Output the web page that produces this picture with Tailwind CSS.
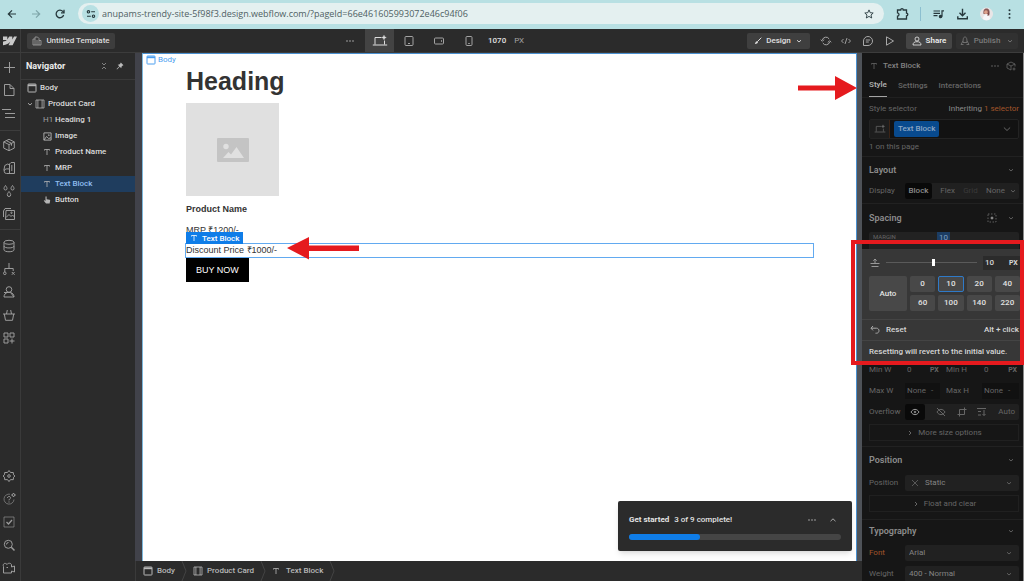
<!DOCTYPE html>
<html lang="en">
<head>
<meta charset="utf-8">
<title>Webflow Designer</title>
<script src="https://cdn.jsdelivr.net/npm/@tailwindcss/browser@4"></script>
</head>
<body class="h-screen overflow-hidden flex flex-col bg-[#1b1b1b] antialiased font-['Roboto',sans-serif] text-[8px] leading-4 text-[#dcdcdc]">

<!-- Shared icons -->
<svg class="hidden">
  <defs>
    <symbol id="chev" viewBox="0 0 8 8"><path d="M2 3.200 4 5l2-1.800" fill="none" stroke="currentColor" stroke-width=".9"/></symbol>
    <symbol id="chevr" viewBox="0 0 8 8"><path d="M3 2 5 4 3 6" fill="none" stroke="currentColor"/></symbol>
    <symbol id="tee" viewBox="0 0 8 8"><path d="M1.500 2.500v-1h5v1M4 1.500v5.500" fill="none" stroke="currentColor" stroke-width=".8"/></symbol>
    <symbol id="bodyi" viewBox="0 0 10 10"><rect x="1" y="1" width="8" height="8" rx=".6" fill="none" stroke="currentColor"/><path d="M1 1.500h8v1.700H1z" fill="currentColor"/></symbol>
    <symbol id="block" viewBox="0 0 10 10"><path d="M1 1h8v8H1zM2.900 1v8M7.100 1v8" fill="none" stroke="currentColor" stroke-width=".8"/></symbol>
    <symbol id="dots" viewBox="0 0 10 10"><g fill="currentColor"><circle cx="2" cy="5" r=".8"/><circle cx="5" cy="5" r=".8"/><circle cx="8" cy="5" r=".8"/></g></symbol>
    <symbol id="desk" viewBox="0 0 16 12"><g fill="none" stroke="currentColor"><path d="M9.500 2.500h-6.500v7M12.500 5.500v4M.8 10h14.400"/></g><path d="m12 .2.700 1.600 1.600.7-1.600.7-.7 1.600-.7-1.600-1.600-.7 1.600-.7z" fill="currentColor" stroke="currentColor" stroke-width=".4"/></symbol>
  </defs>
</svg>

<!-- Browser bar -->
<header class="h-[29px] shrink-0 bg-[#b8e0e3] flex items-start pl-1.5 pr-2 text-[#26383c]">
  <nav class="flex items-center h-[27px] gap-3 w-[72px]">
    <button aria-label="Back"><svg class="size-3" viewBox="0 0 12 12" fill="none" stroke="currentColor" stroke-width="1.200"><path d="M10 6H2.500M6 2.300 2.300 6 6 9.700"/></svg></button>
    <button aria-label="Forward" class="text-[#7ea5a9]"><svg class="size-3" viewBox="0 0 12 12" fill="none" stroke="currentColor" stroke-width="1.200"><path d="M2 6h7.500M6 2.300 9.700 6 6 9.700"/></svg></button>
    <button aria-label="Reload"><svg class="size-3" viewBox="0 0 12 12" fill="none" stroke="currentColor" stroke-width="1.300"><path d="M9.600 7A3.800 3.800 0 1 1 8.800 3.400L10 4.500"/><path d="M10 1.800v3H7"/></svg></button>
  </nav>
  <div class="mt-[3px] h-[21px] flex-1 rounded-full bg-[#e4f0f0] flex items-center pl-1 pr-2.5">
    <button aria-label="Site information" class="size-[17px] rounded-full bg-[#b8e0e3] flex items-center justify-center"><svg class="size-2.5" viewBox="0 0 10 10" fill="none" stroke="currentColor" stroke-width="1.100"><circle cx="2.500" cy="2.800" r="1.200"/><path d="M5.200 2.800H9M1 7.200h3.800"/><circle cx="7.500" cy="7.200" r="1.200"/></svg></button>
    <input aria-label="Address" class="ml-[3px] flex-1 bg-transparent font-['Open_Sans',sans-serif] text-[9px] text-[#4f6063] outline-none" value="anupams-trendy-site-5f98f3.design.webflow.com/?pageId=66e461605993072e46c94f06">
    <button aria-label="Bookmark"><svg class="size-2.5" viewBox="0 0 10 10" fill="none" stroke="currentColor" stroke-width=".9"><path d="m5 .9 1.200 2.800 3 .3L7 6l.7 3L5 7.400 2.300 9 3 6 .8 4l3-.3z"/></svg></button>
  </div>
  <div class="flex items-center h-[27px] ml-3">
    <button aria-label="Extensions"><svg class="size-3.5" viewBox="0 0 14 14" fill="none" stroke="currentColor" stroke-width="1.300"><path d="M1.500 3h3.200a1.200 1.200 0 0 1 2.600 0h3.200v3.200a1.200 1.200 0 0 1 0 2.600V12h-9V9.200c2-.2 2-3.200 0-3.400z"/></svg></button>
    <span class="ml-2.5 mr-3 w-px h-3.5 bg-[#8cbfd0]"></span>
    <button aria-label="Media"><svg class="size-3" viewBox="0 0 12 12" fill="none" stroke="currentColor" stroke-width="1.200"><path d="M.5 3H7M.5 5.300H7M.5 7.600h4"/><circle cx="7.600" cy="8.500" r="1.200" fill="currentColor"/><path d="M9 8.500V2.800h2"/></svg></button>
    <button aria-label="Downloads" class="ml-3"><svg class="size-3" viewBox="0 0 12 12" fill="none" stroke="currentColor" stroke-width="1.400"><path d="M5.500.8v6.500M2.500 4.700l3 3 3-3M.8 8.300v2.500h9.500V8.300"/></svg></button>
    <button aria-label="Profile" class="ml-[11px]"><svg class="size-3.5" viewBox="0 0 14 14"><circle cx="6.500" cy="7" r="6.500" fill="#e9e5e6"/><path d="M3.500 7c-.6-4 1-5.500 3-5.500S10.100 3 9.500 7z" fill="#8a5a58"/><circle cx="6" cy="5.200" r="1.900" fill="#dca28c"/><path d="M3 12c0-3 1.500-4.500 3.500-4.500S10 9 10 12c-2 1.700-5 1.700-7 0z" fill="#f7f7f9"/><path d="M8 3.500 9.500 8l-2 1z" fill="#7a4444"/></svg></button>
    <button aria-label="Menu" class="ml-2.5"><svg class="size-3" viewBox="0 0 12 12" fill="currentColor"><circle cx="5.500" cy="2.200" r="1"/><circle cx="5.500" cy="6" r="1"/><circle cx="5.500" cy="9.800" r="1"/></svg></button>
  </div>
</header>

<!-- Designer top bar -->
<div class="h-6 shrink-0 bg-[#2b2b2b] border-b border-[#3c3c3c] flex items-center pr-1.5">
  <div class="w-[355px] flex items-center self-stretch">
    <button aria-label="Webflow menu" class="w-[21px] self-stretch border-r border-[#3c3c3c] flex items-center justify-center text-[#c9c9c9]"><svg class="w-3.5 h-2.5" viewBox="0 0 14 9" fill="currentColor"><path d="M14 0 9.600 8.700H5.500l1.800-3.600C5.800 7.200 3.600 8.500 0 8.700V5.200s2.400-.1 3.800-1.600H0V0h4.300v3L6.200 0h3.100v3L11 0z"/></svg></button>
    <button class="ml-1.5 h-4 w-[88px] justify-center rounded-xs bg-[#3d3d3d] flex items-center gap-1 font-medium"><svg class="size-2.5 text-[#a5a5a5]" viewBox="0 0 10 10" fill="none" stroke="currentColor" stroke-width=".8"><path d="M3 9V1h2.500L7 2.500V9zM3 3H1v6h2M7 4.500h2V9H7M5 4v5"/></svg>Untitled Template</button>
    <button aria-label="More" class="ml-auto text-[#aaa]"><svg class="size-2.5"><use href="#dots"/></svg></button>
  </div>
  <div class="flex items-center self-stretch text-[#a3a3a3] ml-2.5">
    <button aria-label="Desktop" class="w-[29px] self-stretch bg-[#434343] text-[#dedede] flex items-center justify-center"><svg class="w-4 h-3"><use href="#desk"/></svg></button>
    <button aria-label="Tablet" class="w-[30px] flex justify-center"><svg class="size-2.5" viewBox="0 0 10 10" fill="none" stroke="currentColor"><rect x="1" y=".5" width="8" height="9" rx="1"/><path d="M4 7.500h2"/></svg></button>
    <button aria-label="Mobile landscape" class="w-[30px] flex justify-center"><svg class="size-2.5" viewBox="0 0 10 10" fill="none" stroke="currentColor"><rect x=".5" y="2" width="9" height="6" rx="1"/><path d="M7.500 4.200v1.600"/></svg></button>
    <button aria-label="Mobile portrait" class="w-[30px] flex justify-center"><svg class="size-2.5" viewBox="0 0 10 10" fill="none" stroke="currentColor"><rect x="2" y=".5" width="6" height="9" rx="1"/><path d="M4.200 7.500h1.600"/></svg></button>
    <span class="ml-1 text-[#e0e0e0] font-medium">1070</span><span class="ml-2">PX</span>
  </div>
  <div class="ml-auto flex items-center text-[#a9a9a9]">
    <button class="h-4 w-[63px] rounded-xs bg-[#3f3f3f] text-[#e0e0e0] font-medium flex items-center justify-center gap-1"><svg class="size-2" viewBox="0 0 8 8" fill="none" stroke="currentColor"><path d="M7.300.7 3.500 4.500" /><path d="M3.700 4.300c-1.500-.6-2.200.8-2.900 2.800 2 0 3.700-1 2.900-2.800z" fill="currentColor" stroke="none"/></svg>Design<svg class="size-2"><use href="#chev"/></svg></button>
    <button aria-label="Sync" class="ml-2.5"><svg class="size-3" viewBox="0 0 12 12" fill="none" stroke="currentColor"><path d="M2.400 5A3.700 3.700 0 0 1 9.200 4M9.600 7a3.700 3.700 0 0 1-6.800 1M.8 4.700l1.600 1.600L4 4.700M8 7.300l1.600-1.600 1.600 1.600"/></svg></button>
    <button aria-label="Code" class="ml-2"><svg class="size-3" viewBox="0 0 12 12" fill="none" stroke="currentColor" stroke-width=".9"><path d="M3.500 4 1.500 6l2 2M8.500 4l2 2-2 2M7 3 5 9"/></svg></button>
    <button aria-label="Comments" class="ml-2.5"><svg class="size-3" viewBox="0 0 12 12" fill="none" stroke="currentColor"><path d="M1.500 10.500V6A4.500 4.500 0 1 1 6 10.500zM3.800 5h4.400M3.800 7h3"/></svg></button>
    <button aria-label="Preview" class="ml-2.5"><svg class="size-3" viewBox="0 0 12 12" fill="none" stroke="currentColor"><path d="M2.500 1.800 9.500 6l-7 4.200z"/></svg></button>
    <button class="ml-2.5 h-4 w-[46px] rounded-xs bg-[#454545] text-[#ececec] font-semibold flex items-center justify-center gap-1"><svg class="size-2.5" viewBox="0 0 10 10" fill="none" stroke="currentColor" stroke-width=".8"><circle cx="5" cy="3" r="2"/><path d="M1 9c0-2.500 1.500-3.300 4-3.300S9 6.500 9 9z"/></svg>Share</button>
    <button class="ml-1 h-4 w-[62px] rounded-xs bg-[#313131] text-[#7b7b7b] font-medium flex items-center justify-center gap-1"><svg class="size-2.5" viewBox="0 0 10 10" fill="none" stroke="currentColor" stroke-width=".8"><path d="M3 6.500c0-4 .5-5.500 2-5.500s2 1.500 2 5.500zM3 5 1 8.500h2.500M7 5l2 3.500H6.500"/></svg>Publish<svg class="size-2 ml-0.5"><use href="#chev"/></svg></button>
  </div>
</div>

<div class="flex-1 min-h-0 flex">
  <!-- Tool rail -->
  <nav class="w-[21px] shrink-0 bg-[#2b2b2b] border-r border-[#3a3a3a] flex flex-col text-[#9c9c9c] [&_button]:h-[23px] [&_button]:w-full [&_button]:flex [&_button]:items-center [&_button]:justify-center [&_svg]:size-3.5 [&_svg]:fill-none [&_svg]:stroke-current">
    <div class="pt-0.5 pb-1.5 pr-0.5 border-b border-[#3d3d3d]">
      <button aria-label="Add"><svg viewBox="0 0 14 14"><path d="M7.500 2v11M2 7.500h11"/></svg></button>
      <button aria-label="Pages"><svg viewBox="0 0 14 14"><path d="M2.500 1.500H8L12 5.500v7H2.500zM8 1.500v4h4"/></svg></button>
      <button aria-label="Navigator"><svg viewBox="0 0 14 14"><path d="M0 3.500h9M3 7.500h10M3 11.500h10"/></svg></button>
    </div>
    <div class="pt-0.5 pb-1 pr-0.5 border-b border-[#3d3d3d]">
      <button aria-label="Components"><svg viewBox="0 0 14 14"><path d="m7 1.300 5.300 2.600v6.200L7 12.700l-5.300-2.600V3.900zM1.700 3.900 7 6.600l5.300-2.700M7 6.600v6.100M4.200 2.600l5.300 2.700v2.400"/></svg></button>
      <button aria-label="Variables"><svg viewBox="0 0 14 14"><path d="M7.500 3 9 1.500h3.500v11h-8a2.300 2.300 0 0 1 0-4.600h3zM7.500 7.900v4.600M1.800 9.500l1-5 3-1.500 1.700 1M9.800 4v6"/></svg></button>
      <button aria-label="Styles"><svg viewBox="0 0 14 14"><path d="M3.500 1.500C2.300 3.200 2 3.700 2 4.500a1.500 1.500 0 0 0 3 0c0-.8-.3-1.300-1.500-3zM10.500 1.500C9.300 3.200 9 3.700 9 4.500a1.500 1.500 0 0 0 3 0c0-.8-.3-1.300-1.500-3zM7 7.500c-1.300 1.800-1.700 2.400-1.700 3.300a1.700 1.700 0 0 0 3.400 0c0-.9-.4-1.500-1.700-3.300z"/></svg></button>
      <button aria-label="Assets"><svg viewBox="0 0 14 14"><path d="M4 3.500h8.500v9H3.500zM4 10.500l3-3 2 2 1.500-1.500 2 2M1.500 10V4l1.500-2.500h6"/><circle cx="9.500" cy="5.800" r=".7"/></svg></button>
    </div>
    <div class="pt-1 pr-0.5">
      <button aria-label="CMS"><svg viewBox="0 0 14 14"><ellipse cx="7" cy="3.300" rx="5" ry="2"/><path d="M2 3.300v7.500c0 2.600 10 2.600 10 0V3.300M2 7c0 2.600 10 2.600 10 0"/></svg></button>
      <button aria-label="Logic"><svg viewBox="0 0 14 14"><path d="M7 1v5.500M2.800 10V6.500h8.400V9M9.800 10l2.800 2.800M12.600 10 9.800 12.800"/><circle cx="2.800" cy="11.300" r="1.300"/></svg></button>
      <button aria-label="Users"><svg viewBox="0 0 14 14"><circle cx="7" cy="4.500" r="2.800"/><path d="M2 12c0-2.500 1.500-4 3.500-4.500M8.500 7.500C10.500 8 12 9.500 12 12zH2"/><path d="M2 12h10"/></svg></button>
      <button aria-label="Ecommerce"><svg viewBox="0 0 14 14"><path d="M1 6h12M2.300 6l1.200 6.300h7L11.700 6M4.500 6l.8-4M9.500 6l-.8-4"/></svg></button>
      <button aria-label="Apps"><svg viewBox="0 0 14 14"><path d="M2 2h4v4H2zM8 2h4v4H8zM2 8h4v4H2zM10 7.500v5M7.500 10h5"/></svg></button>
    </div>
    <div class="mt-auto pr-0.5 pb-0.5">
      <button aria-label="Settings"><svg viewBox="0 0 14 14"><path d="m7 1.500 1.500 2 2.800 0 .2 2.300L13 7l-1.500 1.300-.2 2.400-2.800-.1-1.500 2-1.500-2-2.800.1-.2-2.400L1 7l1.500-1.200.2-2.300 2.800 0z"/><circle cx="7" cy="7" r="1.300"/></svg></button>
      <button aria-label="Help"><svg viewBox="0 0 14 14"><path d="M8 2.200A5 5 0 1 0 12 7.500" stroke-opacity=".6"/><path d="M5.500 6c0-2 3-2 3-.2C8.500 7 7 7 7 8.300M7 9.500v1M11.500 1l.7 1.300L13.500 3l-1.300.7-.7 1.300-.7-1.300L9.500 3l1.300-.7z"/></svg></button>
      <button aria-label="Audit"><svg viewBox="0 0 14 14"><path d="M2 2h10v10H2z" stroke-opacity=".6"/><path d="m4.500 7 2 2 3.500-4" stroke-width="1.300"/></svg></button>
      <button aria-label="Search"><svg viewBox="0 0 14 14"><circle cx="6.300" cy="6.300" r="4"/><path d="m9.300 9.300 3.200 3.200" stroke-width="1.500"/><path d="M4.500 6.500a2 2 0 0 1 2-2"/></svg></button>
      <button aria-label="Tutorials"><svg viewBox="0 0 14 14"><path d="M1.500 12V5.500C.3 3 3 1 5 3.500c1-2 4.500-1.500 4.500.5v2l3-1v6l-3-1v2zM4.500 6.500H6"/></svg></button>
    </div>
  </nav>

  <!-- Navigator -->
  <aside class="w-[114px] shrink-0 bg-[#2b2b2b] flex flex-col">
    <div class="h-[27px] border-b border-[#3a3a3a] flex items-center pl-[5px] pr-[11px]">
      <h2 class="text-[9px] font-bold text-[#ededed]">Navigator</h2>
      <button aria-label="Collapse all" class="ml-auto text-[#999]"><svg class="size-2" viewBox="0 0 8 8" fill="none" stroke="currentColor" stroke-width=".8"><path d="M2 1l2 2 2-2M2 7l2-2 2 2"/></svg></button>
      <button aria-label="Pin" class="ml-2 text-[#bbb]"><svg class="size-2" viewBox="0 0 8 8" fill="currentColor"><path d="m4.800.5 2.700 2.700-.8.3-1.200 1.200-.2 1.600-1.600-1.600L1 7.400.6 7l2.700-2.700L1.700 2.700l1.600-.2 1.200-1.200z"/></svg></button>
    </div>
    <ul class="font-medium [&>li]:h-4 [&>li]:flex [&>li]:items-center [&_svg]:text-[#b5b5b5]">
      <li class="pl-1.5 gap-[3px]"><svg class="size-2.5"><use href="#bodyi"/></svg>Body</li>
      <li class="pl-[5px] gap-[3px]"><svg class="size-2"><use href="#chev"/></svg><svg class="-ml-0.5 size-2.5"><use href="#block"/></svg>Product Card</li>
      <li class="pl-[22px] gap-1"><span class="w-2 text-[#a0a0a0] font-normal">H1</span>Heading 1</li>
      <li class="pl-[22px] gap-[3px]"><svg class="size-[9px]" viewBox="0 0 10 10" fill="none" stroke="currentColor"><path d="M1 1h8v8H1zM1 9l3-4 2.500 2.500L8 6.200l1 1"/><circle cx="6.500" cy="3.500" r=".5"/></svg>Image</li>
      <li class="pl-[22px] gap-1"><svg class="size-2"><use href="#tee"/></svg>Product Name</li>
      <li class="pl-[22px] gap-1"><svg class="size-2"><use href="#tee"/></svg>MRP</li>
      <li class="pl-[22px] gap-1 bg-[#1f3d5e] text-[#8fbdf0]"><svg class="size-2"><use href="#tee"/></svg>Text Block</li>
      <li class="pl-[22px] gap-1"><svg class="size-2" viewBox="0 0 8 8" fill="currentColor"><path d="M2.500.8c0-.7 1.100-.7 1.100 0v2.400l3 .6c.4.100.6.300.6.800L6.600 7.500H3L.8 4.700c.3-.6 1-.4 1.700.3z"/></svg>Button</li>
    </ul>
  </aside>

  <div class="flex-1 min-w-0 flex flex-col">
    <div class="flex-1 min-h-0 flex bg-[#41424a] pl-[7px]">
      <!-- Canvas -->
      <main class="relative flex-1 min-w-0 bg-white border border-b-0 border-[#4a90d0] border-l-[#7db8dc] px-[43px] pt-3 text-[9px] text-[#333] font-['Liberation_Sans',sans-serif]">
        <div class="absolute left-[3px] top-0 flex items-center gap-0.5 leading-3 text-[8px] text-[#4a9ef0] font-['Roboto',sans-serif]"><svg class="size-2.5"><use href="#bodyi"/></svg>Body</div>
        <h1 class="text-[25px] leading-[30px] font-bold">Heading</h1>
        <div class="mt-[7px] size-[93px] bg-[#e0e0e0] flex items-center justify-center"><svg class="w-8 h-6" viewBox="0 0 32 24"><rect width="32" height="24" rx="1" fill="#c4c4c4"/><circle cx="9" cy="8.500" r="2.700" fill="#e0e0e0"/><path d="m6 20 5.500-6 2.500 2.500L19.500 9 27 20z" fill="#e0e0e0"/></svg></div>
        <p class="mt-1.5 leading-[14px] font-bold">Product Name</p>
        <p class="mt-[7px] leading-[14px]">MRP ₹1200/-</p>
        <div class="relative mt-[7px] leading-[13px] outline outline-[#62aaf0]">Discount Price ₹1000/-
          <span class="absolute left-0 -top-3 h-3 px-1 flex items-center gap-1 bg-[#0f7de8] text-white text-[8px] font-['Roboto',sans-serif] font-medium whitespace-nowrap"><svg class="size-2"><use href="#tee"/></svg>Text Block</span>
        </div>
        <button class="block mt-px h-6 px-2.5 bg-black text-white">BUY NOW</button>

        <!-- Onboarding checklist -->
        <section class="absolute right-1 bottom-2.5 w-[234px] h-[50px] rounded-xs bg-[#2b2b2b] shadow-md px-[11px] pt-[11px] text-[8px] text-[#e4e4e4] font-['Roboto',sans-serif]">
          <div class="flex items-center"><h2 class="font-bold">Get started</h2><span class="ml-[5px] font-medium">3 of 9 complete!</span>
            <button aria-label="More options" class="ml-auto text-[#aaa]"><svg class="size-2.5"><use href="#dots"/></svg></button>
            <button aria-label="Expand" class="ml-3 mr-1 text-[#aaa]"><svg class="size-2" viewBox="0 0 8 8" fill="none" stroke="currentColor"><path d="M1.500 5.200 4 2.800l2.500 2.400"/></svg></button></div>
          <div role="progressbar" aria-label="Checklist progress" aria-valuenow="3" aria-valuemax="9" class="mt-1.5 h-1.5 rounded-full bg-[#454545]"><div class="h-full rounded-full bg-[#0f7de8]" style="width:33.300%"></div></div>
        </section>

        <!-- Annotation arrows -->
        <svg class="absolute -right-px top-[22px] w-[59px] h-6 z-10" viewBox="0 0 59 24" fill="#e51a1e"><path d="M0 9.500h37V0l22 12-22 12v-9.500H0z"/></svg>
        <svg class="absolute left-[144px] top-[183px] w-[72px] h-6" viewBox="0 0 72 24" fill="#e51a1e"><path d="M0 11 22 0v8.500h50v5.500H22v8.500z"/></svg>
      </main>
      <div class="w-[5px] bg-[#4e5258]"></div>
    </div>
    <!-- Breadcrumb -->
    <nav class="h-5 shrink-0 bg-[#2b2b2b] border-l border-[#3a3a3a] flex items-center pl-[7px] font-medium text-[#b9b9b9]">
      <a href="#" class="flex items-center gap-1"><svg class="size-2.5"><use href="#bodyi"/></svg>Body</a>
      <svg class="w-1.5 h-5 ml-1.5" viewBox="0 0 6 20" fill="none" stroke="#444"><path d="m1 0 4 10-4 10"/></svg>
      <a href="#" class="ml-1.5 flex items-center gap-1"><svg class="size-2.5"><use href="#block"/></svg>Product Card</a>
      <svg class="w-1.5 h-5 ml-1.5" viewBox="0 0 6 20" fill="none" stroke="#444"><path d="m1 0 4 10-4 10"/></svg>
      <a href="#" class="ml-1.5 flex items-center gap-1.5"><svg class="size-2"><use href="#tee"/></svg>Text Block</a>
      <svg class="w-1.5 h-5 ml-1.5" viewBox="0 0 6 20" fill="none" stroke="#444"><path d="m1 0 4 10-4 10"/></svg>
    </nav>
  </div>

  <!-- Style panel -->
  <aside class="relative w-[162px] shrink-0 bg-[#161616] border-r border-[#8a8a8a] text-[#666] [&_h3]:text-[9px] [&_h3]:font-semibold [&_h3]:text-[#8c8c8c]">
    <div class="h-full overflow-hidden">
      <div class="h-[25px] flex items-center pl-2 pr-[7px]"><svg class="size-2"><use href="#tee"/></svg><span class="ml-[5px] font-medium text-[#828282]">Text Block</span>
        <button aria-label="More" class="ml-auto"><svg class="size-2.5"><use href="#dots"/></svg></button>
        <button aria-label="Create component" class="ml-1.5"><svg class="size-2.5" viewBox="0 0 10 10" fill="none" stroke="currentColor" stroke-width=".8"><path d="M5 9 1 7V3l4-2 4 2v2.500M1 3l4 2 4-2M5 5v4M8 6.500v3M6.500 8h3"/></svg></button></div>
      <div role="tablist" class="h-5 px-[7px] flex gap-[11px] items-start border-b border-[#202020] font-medium [&>button]:h-[19px] [&>button]:leading-[14px] [&>button]:pb-1">
        <button role="tab" aria-selected="true" class="border-b border-[#a5a5a5] text-[#adadad] font-semibold">Style</button><button role="tab">Settings</button><button role="tab">Interactions</button></div>
      <div class="px-[7px] border-b border-[#212121]">
        <div class="h-[21px] flex items-center justify-between mr-[-3px]"><span>Style selector</span><span class="text-[#8a8a8a]">Inheriting <span class="text-[#a2552a]">1 selector</span></span></div>
        <div class="h-5 mr-[-3px] border border-[#232323] bg-[#121212] rounded-xs flex items-center gap-1 pr-1.5">
          <span class="w-5 self-stretch bg-[#1d1d1d] border-r border-[#3c2416] flex items-center justify-center"><svg class="w-3 h-2.5"><use href="#desk"/></svg></span>
          <span class="h-4 px-1 rounded-xs bg-[#084a8e] text-[#8ba6c4] font-medium">Text Block</span>
          <button aria-label="Open selector list" class="ml-auto"><svg class="size-2.5" viewBox="0 0 8 8" fill="none" stroke="currentColor" stroke-width=".8"><path d="M1.500 2.800 4 5.200l2.500-2.400"/></svg></button></div>
        <p class="h-[17px]">1 on this page</p>
      </div>
      <section class="pl-[7px] pr-1 pb-1 border-b border-[#212121]">
        <div class="h-[26px] flex items-center justify-between"><h3>Layout</h3><svg class="size-2 mr-1"><use href="#chev"/></svg></div>
        <div class="h-4 flex items-center"><span class="w-9">Display</span>
          <div class="flex-1 flex items-center justify-between bg-[#202020] rounded-xs"><button class="w-[27px] bg-black/70 rounded-xs text-[#8c8c8c] font-medium">Block</button><button>Flex</button><button class="text-[#3a3a3a]">Grid</button><button class="flex items-center gap-1 pr-0.5">None<svg class="size-2"><use href="#chev"/></svg></button></div></div>
      </section>
      <section class="h-[155px] pl-[7px] pr-1">
        <div class="h-7 flex items-center"><h3>Spacing</h3><svg class="ml-auto mr-2.5 size-2.5 text-[#909090]" viewBox="0 0 10 10" fill="none" stroke="currentColor"><path d="M1 1h8v8H1z" stroke-dasharray="1.500 1.500" stroke-width=".6"/><circle cx="5" cy="5" r="1" fill="currentColor"/></svg><svg class="size-2 mr-1"><use href="#chev"/></svg></div>
        <div class="h-[110px] rounded-xs bg-[#222] flex items-start"><span class="w-[68px] pl-1 text-[6px] leading-[9px]">MARGIN</span><button class="px-0.5 leading-3 bg-[#1c3d63] text-[#7f9fc2]">10</button></div>
      </section>
      <section class="pl-[7px] pr-1 pb-[3px] border-b border-[#212121] [&>div]:h-[21px] [&>div]:flex [&>div]:items-center">
        <div><label for="minw" class="w-9">Min W</label><input id="minw" value="0" class="w-5 ml-0.5 bg-transparent"><span class="ml-[3px] w-4 text-[7px] font-bold">PX</span><label for="minh" class="w-9">Min H</label><input id="minh" value="0" class="w-5 bg-transparent ml-0.5"><span class="ml-auto text-[7px] font-bold pr-0.5">PX</span></div>
        <div><label for="maxw" class="w-9">Max W</label><span class="w-[35px] flex items-center bg-[#111]"><select id="maxw" class="appearance-none w-6 pl-0.5"><option>None</option></select><span class="pl-0.5">-</span></span><label for="maxh" class="ml-1.5 w-9">Max H</label><span class="flex-1 flex items-center bg-[#111]"><select id="maxh" class="appearance-none w-6 pl-0.5"><option>None</option></select><span class="pl-0.5">-</span></span></div>
        <div><span class="w-9">Overflow</span><div class="flex-1 h-4 flex items-center justify-between bg-[#202020] rounded-xs pr-1 [&_svg]:size-2.5 [&_svg]:fill-none [&_svg]:stroke-current">
          <button aria-label="Visible" class="h-4 w-5 bg-black/70 rounded-xs flex items-center justify-center text-[#999]"><svg viewBox="0 0 10 10"><path d="M1 5c2-3.500 6-3.500 8 0-2 3.500-6 3.500-8 0z"/><circle cx="5" cy="5" r=".8"/></svg></button>
          <button aria-label="Hidden"><svg viewBox="0 0 10 10"><path d="M1 5c2-3.500 6-3.500 8 0-2 3.500-6 3.500-8 0zM1 1l8 8"/></svg></button>
          <button aria-label="Clip"><svg viewBox="0 0 10 10"><path d="M2.500 9.500V2.500h5M7.500.5v7h-5M.5 7.500h2M7.500 2.500h2"/></svg></button>
          <button aria-label="Scroll"><svg viewBox="0 0 10 10"><path d="M0 1.500h9M1 4.500h3M1 8h3M7 3v5.500M5.500 7 7 8.500 8.500 7"/></svg></button>
          <button>Auto</button></div></div>
        <div><button class="w-full h-[17px] border border-[#202020] flex items-center justify-center gap-1"><svg class="size-2"><use href="#chevr"/></svg>More size options</button></div>
      </section>
      <section class="pl-[7px] pr-1 pb-[5px] border-b border-[#212121] [&>div]:h-[21px] [&>div]:flex [&>div]:items-center">
        <header class="h-[25px] flex items-center justify-between"><h3>Position</h3><svg class="size-2 mr-1"><use href="#chev"/></svg></header>
        <div><label for="pos" class="w-9">Position</label><span class="flex-1 h-4 bg-[#212121] rounded-xs flex items-center px-1.5"><svg class="size-2" viewBox="0 0 8 8" stroke="currentColor" stroke-width=".8"><path d="m1 1 6 6M7 1 1 7"/></svg><select id="pos" class="appearance-none flex-1 pl-1.5 text-[#848484]"><option>Static</option></select><svg class="size-2"><use href="#chev"/></svg></span></div>
        <div><button class="w-full h-[17px] border border-[#202020] flex items-center justify-center gap-1"><svg class="size-2"><use href="#chevr"/></svg>Float and clear</button></div>
      </section>
      <section class="pl-[7px] pr-1 [&>div]:h-[21px] [&>div]:flex [&>div]:items-center">
        <header class="h-[22px] flex items-center justify-between"><h3>Typography</h3><svg class="size-2 mr-1"><use href="#chev"/></svg></header>
        <div><label for="font" class="w-9 text-[#a2552a]">Font</label><span class="flex-1 h-4 bg-[#212121] rounded-xs flex items-center px-1 pr-1.5"><select id="font" class="appearance-none flex-1 text-[#848484]"><option>Arial</option></select><svg class="size-2"><use href="#chev"/></svg></span></div>
        <div><label for="weight" class="w-9">Weight</label><span class="flex-1 h-4 bg-[#212121] rounded-xs flex items-center px-1 pr-1.5"><select id="weight" class="appearance-none flex-1 text-[#848484]"><option>400 - Normal</option></select><svg class="size-2"><use href="#chev"/></svg></span></div>
      </section>
    </div>

    <!-- Margin value popover -->
    <div class="absolute left-0 right-0 top-[196px] h-[113px] bg-[#373737] text-[#d6d6d6] font-medium">
      <div class="h-[27px] flex items-center pl-2">
        <svg class="size-2.5 text-[#999]" viewBox="0 0 10 10" fill="none" stroke="currentColor"><path d="M.5 5.500h9M5 5V1M3.300 2.700 5 1l1.700 1.700M1.500 8.500h7"/></svg>
        <input type="range" aria-label="Top margin" min="0" max="100" value="52" class="ml-1.5 w-[91px] h-3 appearance-none bg-transparent [&::-webkit-slider-runnable-track]:h-px [&::-webkit-slider-runnable-track]:bg-[#5a5a5a] [&::-webkit-slider-thumb]:appearance-none [&::-webkit-slider-thumb]:w-[3px] [&::-webkit-slider-thumb]:h-[7px] [&::-webkit-slider-thumb]:-mt-[3px] [&::-webkit-slider-thumb]:bg-white">
        <span class="ml-1.5 flex-1 h-3.5 bg-[#2b2b2b] flex items-center pl-0.5"><input aria-label="Margin value" value="10" class="w-6 bg-transparent"><span class="text-[7px] font-bold">PX</span></span>
      </div>
      <div class="pl-[7px] pr-[3px] grid grid-cols-[38px_repeat(4,1fr)] grid-rows-2 gap-x-[3px] gap-y-[3px] [&>button]:h-4 [&>button]:bg-[#484848] [&>button]:rounded-xs [&>button]:text-[#e2e2e2] [&>button]:leading-4">
        <button class="row-span-2 h-full!">Auto</button><button>0</button><button class="outline outline-[#2f7ac8] -outline-offset-1">10</button><button>20</button><button>40</button><button>60</button><button>100</button><button>140</button><button>220</button>
      </div>
      <div class="mt-2 h-[22px] border-y border-[#444] flex items-center justify-between pl-2 pr-1"><button class="flex items-center gap-1.5"><svg class="size-2.5 text-[#aaa]" viewBox="0 0 10 10" fill="none" stroke="currentColor"><path d="M3 1 1 3.200l2 2.200M1 3.200h5.500c3.300 0 3.300 5 0 5H5.500"/></svg>Reset</button><span>Alt + click</span></div>
      <p class="pl-[7px] pt-[3px] whitespace-nowrap">Resetting will revert to the initial value.</p>
    </div>
    <div class="absolute -left-[11px] -right-px top-[187px] h-[125px] border-4 border-[#e51a1e]"></div>
  </aside>
</div>
</body>
</html>
